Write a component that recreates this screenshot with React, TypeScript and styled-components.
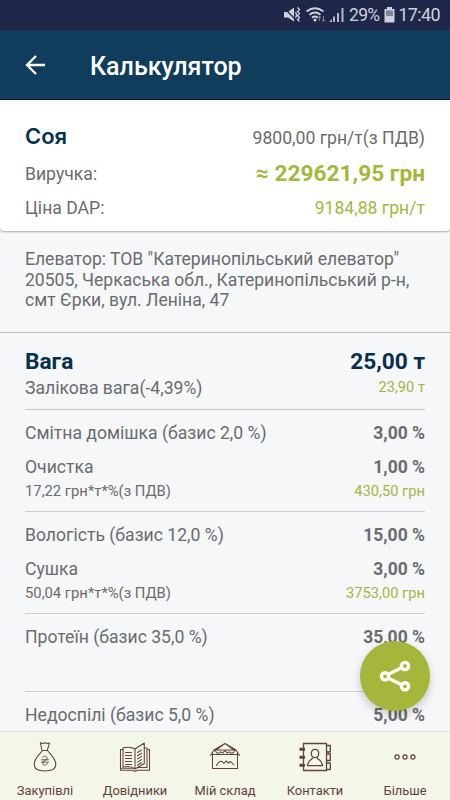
import React from "react";
import styled, { createGlobalStyle } from "styled-components";

const GREEN = "#a5b83c";
const NAVY = "#06304f";
const BROWN = "#5f4239";

const GlobalStyle = createGlobalStyle`
  * { box-sizing: border-box; }
  body { margin: 0; background: #f5f7f9; }
`;

const Screen = styled.div`
  width: 450px;
  height: 800px;
  position: relative;
  overflow: hidden;
  display: flex;
  flex-direction: column;
  background: #f5f7f9;
  color: #6b6c6e;
  font-family: Roboto, sans-serif;
  white-space: nowrap;
`;

const StatusBar = styled.header`
  flex: none;
  height: 30px;
  padding: 0 10px 0 283px;
  display: flex;
  align-items: center;
  background: #1f2749;
  color: #cdd1de;
  font-size: 18px;
  line-height: 30px;
`;

const StatusIcons = styled.svg`
  flex: none;
  width: 64px;
  height: 30px;
`;

const Percent = styled.span`
  width: 34px;
  margin-left: 2px;
  font-size: 17.5px;
  letter-spacing: -0.7px;
`;

const Battery = styled.svg`
  flex: none;
  width: 12px;
  height: 30px;
`;

const Clock = styled.span`
  margin-left: auto;
  font-size: 18px;
  letter-spacing: -0.6px;
`;

const AppBar = styled.div`
  flex: none;
  height: 70px;
  padding-left: 25px;
  display: flex;
  align-items: center;
  background: #103d5c;
  border-bottom: 1px solid #08234a;
`;

const BackIcon = styled.svg`
  width: 21px;
  height: 20px;
  margin-top: 1px;
`;

const Title = styled.h1`
  margin: 5px 0 0 44px;
  color: #fff;
  font-size: 25px;
  font-weight: 500;
  line-height: 36px;
`;

const Summary = styled.section`
  flex: none;
  height: 131px;
  padding: 20px 25px 0;
  background: #fff;
  border-radius: 0 0 4px 4px;
  box-shadow: 0 1px 2px rgba(0, 0, 0, 0.3);
`;

const Row = styled.div<{ $h: number }>`
  display: flex;
  justify-content: space-between;
  height: ${(p) => p.$h}px;
  line-height: ${(p) => p.$h}px;
`;

const Crop = styled.h2`
  margin: -2px 0 0;
  color: ${NAVY};
  font-family: Inter, sans-serif;
  font-size: 22px;
  font-weight: 600;
  line-height: inherit;
`;

const Label = styled.span<{ $size?: number }>`
  font-size: ${(p) => p.$size ?? 17.6}px;
`;

const Revenue = styled.strong`
  color: ${GREEN};
  font-size: 22.7px;
  font-weight: 700;
`;

const Amount = styled.span<{ $size?: number }>`
  color: ${GREEN};
  font-size: ${(p) => p.$size ?? 14.7}px;
`;

const NetWeight = styled(Amount)`
  margin-top: -1px;
`;

const Value = styled.span`
  font-size: 17.5px;
  font-weight: 700;
`;

const Address = styled.address`
  flex: none;
  height: 102px;
  padding: 18px 25px 0;
  border-bottom: 1px solid #bfc1c3;
  font-size: 17.55px;
  font-style: normal;
  line-height: 20.7px;
`;

const Details = styled.main`
  flex: none;
  height: 398px;
  overflow: hidden;
  padding: 0 25px;
`;

const Weight = styled.section`
  height: 77px;
  padding-top: 13px;
  border-bottom: 1px solid #c4c6c8;
`;

const WeightHead = styled(Row)`
  color: ${NAVY};
  font-size: 22.7px;
  font-weight: 700;
`;

const Group = styled.section<{ $h: number }>`
  height: ${(p) => p.$h}px;
  padding-top: 6px;
  border-bottom: 1px solid #cbcdcf;
`;

const Fab = styled.button`
  position: absolute;
  left: 360px;
  top: 641px;
  width: 70px;
  height: 70px;
  padding: 0;
  border: 0;
  border-radius: 50%;
  background: #a6b63a;
  box-shadow: 0 4px 9px rgba(0, 0, 0, 0.2);
`;

const FabIcon = styled.svg`
  display: block;
  width: 70px;
  height: 70px;
`;

const Nav = styled.nav`
  flex: none;
  height: 69px;
  display: grid;
  grid-template-columns: repeat(5, 90px);
  background: #f5f6ea;
  border-top: 1px solid #e2e4dd;
`;

const NavItem = styled.a`
  display: flex;
  flex-direction: column;
  align-items: center;
  padding-top: 7px;
  color: ${BROWN};
  font-size: 12.9px;
  line-height: 18px;
`;

const NavIcon = styled.svg`
  width: 36px;
  height: 34px;
  margin-bottom: 9px;
  fill: none;
  stroke: ${BROWN};
  stroke-width: 1.05;
  stroke-linecap: round;
  stroke-linejoin: round;
`;

interface Line {
  label: string;
  value: string;
}

interface Quality extends Line {
  height: number;
  service?: Line;
  price?: Line;
}

const qualities: Quality[] = [
  {
    label: "Смітна домішка (базис 2,0 %)",
    value: "3,00 %",
    height: 102,
    service: { label: "Очистка", value: "1,00 %" },
    price: { label: "17,22 грн*т*%(з ПДВ)", value: "430,50 грн" },
  },
  {
    label: "Вологість (базис 12,0 %)",
    value: "15,00 %",
    height: 102,
    service: { label: "Сушка", value: "3,00 %" },
    price: { label: "50,04 грн*т*%(з ПДВ)", value: "3753,00 грн" },
  },
  { label: "Протеїн (базис 35,0 %)", value: "35,00 %", height: 78 },
  { label: "Недоспілі (базис 5,0 %)", value: "5,00 %", height: 78 },
];

const navItems = [
  {
    label: "Закупівлі",
    icon: (
      <>
        <path d="M13.400 3.800l2.600.8 2-.8 2.500.8 2-.5-2.300 7.400h-5.200zM15.500 11.500C12.500 15.500 7.200 19 7.200 25.500c0 5 4.500 6.500 10.800 6.500s10.800-1.500 10.800-6.500c0-6.500-5.300-10-8.300-14" />
        <path d="M15.500 18.200c1.200-1.800 5-1.300 4.500 1.300-.4 2.100-4.700 2.200-4.500 4.800.2 2.500 3.800 2.300 5 .2M14.500 20.800h7M14.500 23.200h7" strokeWidth="0.900" />
      </>
    ),
  },
  {
    label: "Довідники",
    icon: (
      <>
        <path d="M18 10c-3-2-8-2-12-1.300V28c4-.8 9-.6 12 2zM18 10l9.300-6v20.500L18 30z" />
        <path d="M6 10.500H3.500v20.700h12l1.500.9h2l1.500-.9h12V10.500H30M30 9v19.500h-9.500M27.300 9H30M3.500 29.200h12" />
        <path d="M8.500 13.500h6M8.500 16.500h6M8.500 19.500h6M8.500 22.500h6M8.500 25.500h6M20.500 13.500l4-2.500M20.500 16.700l4-2.500M20.500 19.900l4-2.500M20.500 23.100l4-2.500M20.500 26.200l4-2.500" />
      </>
    ),
  },
  {
    label: "Мій склад",
    icon: (
      <>
        <path d="M3.500 16.500L7 11l11-6.500L29 11l3.500 5.500M5.500 14v15.500h25V14M7 11h22M5.500 15.500h25M18 4.500l-9 6.500M18 4.500l9 6.500" />
        <path d="M8 11.500c2 3.500 4 3.500 5.500 1.200l2 1.500 2.500-2.500 2.500 2.500 2-1.500c1.500 2.300 3.500 2.300 5.500-1.200M9.500 26.500c2-4 5-6 7.500-2l2-2.500 2.500 2 2-1.500 3.500 3.500" />
      </>
    ),
  },
  {
    label: "Контакти",
    icon: (
      <>
        <path d="M6.500 4.500h23v27h-23zM29.500 6.500h3.800v6.500h-3.800M29.500 15h3.800v6.500h-3.800M29.500 24h3.800v6.500h-3.800" strokeWidth="1.300" />
        <path d="M3 9.500h4.500M3 11h4.500M3 17.500h4.500M3 19h4.500M3 25.500h4.500M3 27h4.500" strokeWidth="1.400" />
        <ellipse cx="18" cy="14.500" rx="3.700" ry="4.200" strokeWidth="1.300" />
        <path d="M15.500 19c0 1.500-5 2-5 7.700h15c0-5.700-5-6.200-5-7.700" strokeWidth="1.300" />
      </>
    ),
  },
  {
    label: "Більше",
    icon: (
      <>
        <circle cx="10.100" cy="18" r="2.100" strokeWidth="1.200" />
        <circle cx="18" cy="18" r="2.100" strokeWidth="1.200" />
        <circle cx="25.900" cy="18" r="2.100" strokeWidth="1.200" />
      </>
    ),
  },
];

export default function App() {
  return (
    <>
      <GlobalStyle />
      <Screen>
        <StatusBar>
          <StatusIcons viewBox="0 0 64 30" fill="#cdd1de">
            <path d="M1 12h4l6-4.500v14L5 17.500H1z" />
            <path d="M1 8l13 13" stroke="#1f2749" strokeWidth="1.300" />
            <path d="M12.500 12q2 3 0 6M14.500 7.500l2 2-2 2 2 2-2 2 2 2-2 2 2 2" fill="none" stroke="#cdd1de" strokeWidth="1.300" />
            <g fill="none" stroke="#cdd1de" strokeWidth="1.800">
              <path d="M23.500 11.500q8.500-6.500 17 0M26.500 14.800q5.500-4.500 11 0M29 17.800q3-2.500 6 0" />
            </g>
            <circle cx="32" cy="20" r="1.500" />
            <path d="M36.500 16v5M35 18l1.500-2 1.500 2M40.500 16v5M39 19.500l1.500 2 1.500-2" fill="none" stroke="#777e98" />
            <path d="M46 22h3v-3zM50 16.500h2V22h-2zM54 13h2v9h-2zM58.500 8h2v14h-2z" opacity=".85" />
          </StatusIcons>
          <Percent>29%</Percent>
          <Battery viewBox="0 0 12 30" fill="#cdd1de">
            <path d="M4 7h5v2h2.500v13.500h-10V9H4z" />
            <path d="M3 10.500h7v5.500H3z" fill="#7d8399" />
          </Battery>
          <Clock>17:40</Clock>
        </StatusBar>
        <AppBar>
          <BackIcon viewBox="0 0 21 20" fill="none" stroke="#fff" strokeWidth="2.300">
            <path d="M20 10H2M11 1L2 10l9 9" />
          </BackIcon>
          <Title>Калькулятор</Title>
        </AppBar>
        <Summary>
          <Row $h={36}>
            <Crop>Соя</Crop>
            <Label>9800,00 грн/т(з ПДВ)</Label>
          </Row>
          <Row $h={36}>
            <Label>Виручка:</Label>
            <Revenue>≈ 229621,95 грн</Revenue>
          </Row>
          <Row $h={32}>
            <Label>Ціна DAP:</Label>
            <Amount $size={17.6}>9184,88 грн/т</Amount>
          </Row>
        </Summary>
        <Address>
          Елеватор: ТОВ "Катеринопільський елеватор"
          <br />
          20505, Черкаська обл., Катеринопільський р-н,
          <br />
          смт Єрки, вул. Леніна, 47
        </Address>
        <Details>
          <Weight>
            <WeightHead $h={32}>
              <span>Вага</span>
              <span>25,00 т</span>
            </WeightHead>
            <Row $h={20}>
              <Label>Залікова вага(-4,39%)</Label>
              <NetWeight>23,90 т</NetWeight>
            </Row>
          </Weight>
          {qualities.map((q) => (
            <Group key={q.label} $h={q.height}>
              <Row $h={34}>
                <Label>{q.label}</Label>
                <Value>{q.value}</Value>
              </Row>
              {q.service && (
                <Row $h={34}>
                  <Label>{q.service.label}</Label>
                  <Value>{q.service.value}</Value>
                </Row>
              )}
              {q.price && (
                <Row $h={14}>
                  <Label $size={14.8}>{q.price.label}</Label>
                  <Amount>{q.price.value}</Amount>
                </Row>
              )}
            </Group>
          ))}
        </Details>
        <Nav>
          {navItems.map((item) => (
            <NavItem key={item.label}>
              <NavIcon viewBox="0 0 36 34">{item.icon}</NavIcon>
              {item.label}
            </NavItem>
          ))}
        </Nav>
        <Fab aria-label="Поділитися">
          <FabIcon viewBox="0 0 70 70" fill="none" stroke="#fff" strokeWidth="3.400">
            <path d="M28 33.500l14-7M28 37l14 7" />
            <circle cx="25" cy="35.300" r="3.600" />
            <circle cx="45" cy="25" r="3.600" />
            <circle cx="45" cy="45.300" r="3.600" />
          </FabIcon>
        </Fab>
      </Screen>
    </>
  );
}
